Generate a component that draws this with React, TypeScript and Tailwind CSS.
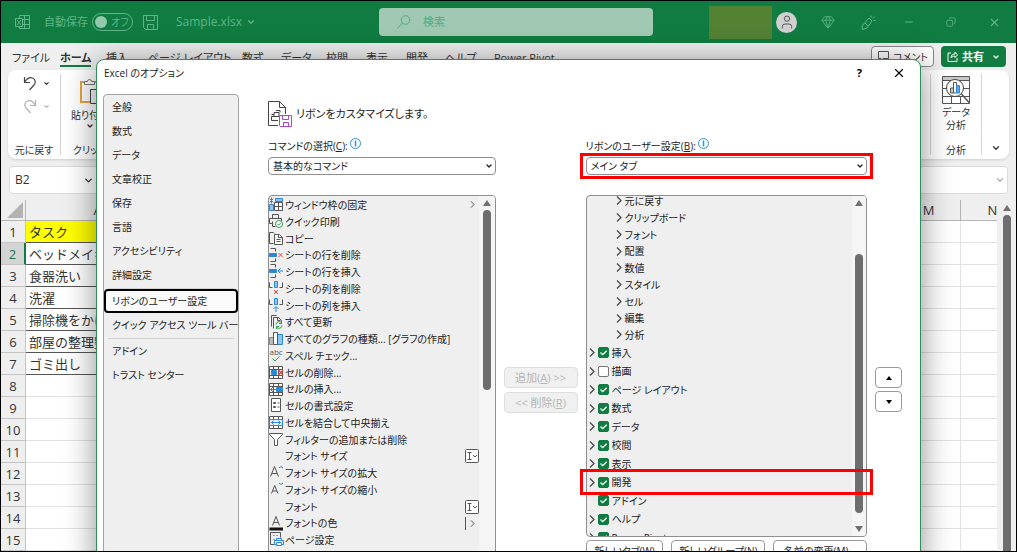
import React, { useState } from 'react';
import { Gem, ChevronDown, Minus, X, Copy, User } from 'lucide-react';

const GRAY = '#555';
const BLUE = '#2b88d8';
const RED = '#e8413c';
const GREEN = '#2ea04f';

interface Command {
  label: string;
  icon?: React.ReactNode;
  trailing?: 'more' | 'input' | 'split';
}

const cells = (
  <>
    <path d="M1 2h13v12H1z" fill="#fff" />
    <path d="M1 5h13M1 11h13M5 2v12M10 2v12" />
  </>
);

const commands: Command[] = [
  {
    label: 'ウィンドウ枠の固定',
    trailing: 'more',
    icon: (
      <>
        <path d="M6 6h8v8H6z" fill="#fff" />
        <path d="M7 2h7v3H7zM1 8h4v6H1z" fill="#8cc4f2" stroke={BLUE} />
        <path d="M6 10h8M10 6v8" />
        <path d="M3 1v6M1 2l4 4M5 2L1 6" stroke={BLUE} />
      </>
    ),
  },
  {
    label: 'クイック印刷',
    icon: (
      <>
        <path d="M4 5V1h6v4M4 10H1V5h12v3M4 8v5h3" />
        <circle cx="10.500" cy="10.500" r="3.500" fill="#fff" stroke={GREEN} />
        <path d="M9 10.500l1.200 1.200 2-2.200" stroke={GREEN} />
      </>
    ),
  },
  {
    label: 'コピー',
    icon: (
      <>
        <path d="M5 13H1V2h4l1 1" />
        <path d="M6 4h5l3 3v7H6z" fill="#fff" />
        <path d="M10 4v3h4M8 9h4M8 11h4" />
      </>
    ),
  },
  {
    label: 'シートの行を削除',
    icon: (
      <>
        <path d="M2 1h5v3M2 14h5v-3" />
        <path d="M1 6h7v3H1z" fill={BLUE} stroke={BLUE} />
        <path d="M10 5.500l4 4M14 5.500l-4 4" stroke={RED} />
      </>
    ),
  },
  {
    label: 'シートの行を挿入',
    icon: (
      <>
        <path d="M2 1h5v3M2 14h5v-3" />
        <path d="M1 6h7v3H1z" fill={BLUE} stroke={BLUE} />
        <path d="M14.500 7.500H10M12 5l-2.500 2.500L12 10" stroke={BLUE} />
      </>
    ),
  },
  {
    label: 'シートの列を削除',
    icon: (
      <>
        <path d="M1 2v5h3M14 2v5h-3" />
        <path d="M6 1h3v6H6z" fill="#8cc4f2" stroke={BLUE} />
        <path d="M5.500 9.500l4 4M9.500 9.500l-4 4" stroke={RED} />
      </>
    ),
  },
  {
    label: 'シートの列を挿入',
    icon: (
      <>
        <path d="M1 2v5h3M14 2v5h-3" />
        <path d="M6 1h3v6H6z" fill="#8cc4f2" stroke={BLUE} />
        <path d="M7.500 14.500V9.500M5 11.500L7.500 9l2.500 2.500" stroke={BLUE} />
      </>
    ),
  },
  {
    label: 'すべて更新',
    icon: (
      <>
        <path d="M3 12V1h5M5 14V3h5l3 3v1M9 3v3h3" />
        <path d="M7.500 10a3 3 0 0 1 5.500-1.500M13 6.500v2.500h-2.500M13.500 11a3 3 0 0 1-5.500 1.500M8 14.500V12h2.500" stroke={GREEN} />
      </>
    ),
  },
  {
    label: 'すべてのグラフの種類... [グラフの作成]',
    icon: (
      <>
        <path d="M1 7h4v7H1z" fill="#bbb" stroke="#888" />
        <path d="M9 4h5v10H9z" fill="#8cc4f2" stroke={BLUE} />
        <path d="M5 2h4v12H5z" fill="#fff" />
      </>
    ),
  },
  {
    label: 'スペル チェック...',
    icon: (
      <>
        <text x="1" y="7" fontSize="8" fill={GRAY} stroke="none">abc</text>
        <path d="M4 11l2.500 2.500L11 9" stroke={GREEN} />
      </>
    ),
  },
  {
    label: 'セルの削除...',
    icon: (
      <>
        {cells}
        <path d="M3 6h5v4H3z" fill={BLUE} stroke={BLUE} />
        <path d="M10 5.500l4.500 5M14.500 5.500l-4.500 5" stroke={RED} strokeWidth="1.300" />
      </>
    ),
  },
  {
    label: 'セルの挿入...',
    icon: (
      <>
        {cells}
        <path d="M8 6h6v4H8z" fill={BLUE} stroke={BLUE} />
        <path d="M8 8H2M4.500 5.500L2 8l2.500 2.500" stroke={BLUE} />
      </>
    ),
  },
  {
    label: 'セルの書式設定',
    icon: (
      <>
        <path d="M3 1h9v13H3z" fill="#fff" />
        <path d="M5 5h2v1H5zM5 9h2v1H5zM9 5.500h2M9 9.500h2" />
      </>
    ),
  },
  {
    label: 'セルを結合して中央揃え',
    icon: (
      <>
        {cells}
        <path d="M1 5h13v6H1z" fill="#e6f3fc" stroke={BLUE} />
        <path d="M3 8h9M5 6L3 8l2 2M10 6l2 2-2 2" stroke={BLUE} />
      </>
    ),
  },
  {
    label: 'フィルターの追加または削除',
    icon: <path d="M1 2h13v1L9 8v6H6V8L1 3z" fill="#fff" />,
  },
  { label: 'フォント サイズ', trailing: 'input' },
  {
    label: 'フォント サイズの拡大',
    icon: (
      <>
        <path d="M2 12L6 2l4 10M3.300 9h5.400" />
        <path d="M10.500 3.500L12.500 2l2 1.500" stroke={BLUE} />
      </>
    ),
  },
  {
    label: 'フォント サイズの縮小',
    icon: (
      <>
        <path d="M3 12l3.200-8 3.200 8M4 9.500h4.400" />
        <path d="M10.500 1.500l2 1.500 2-1.500" stroke={BLUE} />
      </>
    ),
  },
  { label: 'フォント', trailing: 'input' },
  {
    label: 'フォントの色',
    trailing: 'split',
    icon: (
      <>
        <path d="M4 10L7.500 1 11 10M5.200 7h4.600" />
        <path d="M1 12h13.500v3H1z" fill="#111" stroke="none" />
      </>
    ),
  },
  {
    label: 'ページ設定',
    icon: (
      <>
        <path d="M6 13H2V1h10v5M5 4h1M5 8h1M8 4h1" />
        <path d="M8 9V7h5v2M8 13H6V9h9v4h-2M8 11h5v3H8z" fill="#fff" stroke={BLUE} />
      </>
    ),
  },
];

const ribbonGroups = ['元に戻す', 'クリップボード', 'フォント', '配置', '数値', 'スタイル', 'セル', '編集', '分析'];

const initialTabs = [
  { label: '挿入', checked: true, expandable: true },
  { label: '描画', checked: false, expandable: true },
  { label: 'ページ レイアウト', checked: true, expandable: true },
  { label: '数式', checked: true, expandable: true },
  { label: 'データ', checked: true, expandable: true },
  { label: '校閲', checked: true, expandable: true },
  { label: '表示', checked: true, expandable: true },
  { label: '開発', checked: true, expandable: true },
  { label: 'アドイン', checked: true, expandable: false },
  { label: 'ヘルプ', checked: true, expandable: true },
  { label: 'Power Pivot', checked: true, expandable: true },
];

const menuTabs = ['ファイル', 'ホーム', '挿入', 'ページ レイアウト', '数式', 'データ', '校閲', '表示', '開発', 'ヘルプ', 'Power Pivot'];
const columns = ['A', 'B', 'C', 'D', 'E', 'F', 'G', 'H', 'I', 'J', 'K', 'L', 'M', 'N'];
const tasks = ['タスク', 'ベッドメイキング', '食器洗い', '洗濯', '掃除機をかける', '部屋の整理整頓', 'ゴミ出し'];

function Glyph({ children }: { children?: React.ReactNode }) {
  return (
    <svg width="15" height="15" viewBox="0.500 0.500 15 15" fill="none" stroke={GRAY} className="shrink-0">
      {children}
    </svg>
  );
}

function Triangle({ down = false }: { down?: boolean }) {
  return (
    <svg width="8" height="6" viewBox="0 0 8 6" fill="#707070" className="shrink-0">
      <path d={down ? 'M0 0h8L4 6z' : 'M0 6h8L4 0z'} />
    </svg>
  );
}

function Expander({ small = false }: { small?: boolean }) {
  return (
    <svg
      width={small ? 5 : 6}
      height={small ? 7 : 9}
      viewBox="0 0 6 9"
      fill="none"
      stroke="#444"
      strokeWidth="1.200"
      className="shrink-0"
    >
      <path d="M1 0.500l4 4-4 4" />
    </svg>
  );
}

function InfoMark() {
  return (
    <svg width="11" height="11" viewBox="0 0 11 11" fill="none" stroke="#2b95d6" className="mb-1">
      <circle cx="5.500" cy="5.500" r="5" />
      <path d="M5.500 2.500v6" strokeWidth="1.500" />
    </svg>
  );
}

function TitleBar() {
  return (
    <header className="flex h-[42px] items-center bg-[#107c41] text-[#5fb588]">
      <div className="flex w-[378px] items-center pl-[14px] whitespace-nowrap">
        <svg width="15" height="15" viewBox="0 0 15 15" fill="none" stroke="currentColor">
          <path d="M4.500 3V0.500h10v13h-10V11M9.500 0.500v13M4 4.500h10M8 9.500h6" />
          <path d="M0.500 3.500h7v8h-7z" fill="#107c41" />
          <path d="M2 5l4 5M6 5l-4 5" />
        </svg>
        <span className="ml-[14px] text-[11px]">自動保存</span>
        <button className="ml-1 flex h-[18px] w-[41px] items-center gap-1 rounded-full border border-[#5fb588] px-0.5 text-[10px] leading-4">
          <span className="size-3 shrink-0 rounded-full bg-[#8fcbab]" />
          オフ
        </button>
        <button aria-label="保存" className="ml-[10px]">
          <svg width="15" height="15" viewBox="0 0 15 15" fill="none" stroke="currentColor">
            <path d="M0.500 0.500h14v14h-12l-2-2zM3.500 0.500v5h8v-5M4.500 14.500v-5h6v5" />
          </svg>
        </button>
        <button className="ml-[18px] flex items-center gap-1 text-[12px]">
          Sample.xlsx
          <ChevronDown className="size-[10px]" strokeWidth={3} />
        </button>
      </div>
      <label className="flex h-7 flex-1 items-center gap-3 rounded-sm bg-[#a0c8b3] px-[18px] text-[#4bae7a]">
        <svg width="14" height="14" viewBox="0 0 14 14" fill="none" stroke="currentColor" className="shrink-0">
          <circle cx="8.500" cy="5" r="4.300" />
          <path d="M5.400 8.200L0.500 13.300" />
        </svg>
        <input
          aria-label="検索"
          placeholder="検索"
          className="min-w-0 flex-1 bg-transparent text-[11px] outline-none placeholder:text-[#4bae7a]"
        />
      </label>
      <div className="flex w-[363px] items-center justify-end pr-[15px]">
        <span className="h-[33px] w-[63px] bg-[#548235]" />
        <span className="ml-1 flex size-[21px] items-center justify-center rounded-full bg-[#d0d0d0] text-[#555]">
          <User className="size-4" strokeWidth={1.5} />
        </span>
        <button aria-label="プレミアム" className="ml-6">
          <Gem className="size-[14px]" strokeWidth={1.5} />
        </button>
        <button aria-label="ペン" className="ml-[26px]">
          <svg width="15" height="15" viewBox="0 0 15 15" fill="none" stroke="currentColor">
            <path d="M8 3l3 3-5 7-4.500 1.500L1 11zM4 8l3 3M10 2.500V0.500M12 3.500l1.500-2M12.500 5.500h2" />
          </svg>
        </button>
        <button aria-label="最小化" className="ml-[27px]">
          <Minus className="size-3" strokeWidth={2} />
        </button>
        <button aria-label="元のサイズに戻す" className="ml-[31px]">
          <Copy className="size-[10px] -scale-x-100" strokeWidth={2} />
        </button>
        <button aria-label="閉じる" className="ml-8">
          <X className="size-[13px]" strokeWidth={2} />
        </button>
      </div>
    </header>
  );
}

function Ribbon() {
  return (
    <div className="text-[10px] leading-[14px] text-[#333]">
      <div className="flex h-[27px] justify-between pr-[10px] pl-[11px]">
        <nav className="grid grid-cols-[48px_46px_42px_94px_39px_45px_40px_40px_39px_49px_auto] text-[11px] whitespace-nowrap">
          {menuTabs.map((tab) => (
            <a key={tab} href="#" className={`pt-2 ${tab === 'ホーム' ? 'font-bold' : ''}`}>
              <span className={`inline-block h-4 ${tab === 'ホーム' ? 'border-b-2 border-[#107c41]' : ''}`}>{tab}</span>
            </a>
          ))}
        </nav>
        <div className="flex items-start gap-[7px] pt-[3px]">
          <button className="flex h-[21px] w-[63px] items-center gap-1 rounded border border-[#8a8a8a] bg-white pl-1.5 whitespace-nowrap">
            <svg width="11" height="11" viewBox="0 0 11 11" fill="none" stroke={GRAY} className="shrink-0">
              <path d="M0.500 0.500h10v7H5l-2 2.500V7.500H0.500z" />
            </svg>
            コメント
          </button>
          <button className="flex h-[21px] w-[65px] items-center justify-center gap-1 rounded bg-[#107c41] text-[11px] font-bold text-white">
            <svg width="11" height="11" viewBox="0 0 11 11" fill="none" stroke="#fff">
              <path d="M4 2H1v8.500h9V7M4 7c0-3 2-4 4-4V1l2.500 3L8 6.500V5C6 5 5 6 4 7z" />
            </svg>
            共有
            <ChevronDown className="ml-1 size-2" strokeWidth={4} />
          </button>
        </div>
      </div>

      <div className="mx-[7px] flex h-[89px] justify-between rounded-lg bg-white py-1 shadow">
        <div className="flex">
          <div className="flex w-[53px] flex-col items-center border-r border-[#d4d4d4] pt-0.5">
            <button aria-label="元に戻す" className="flex items-center gap-1.5 pl-1">
              <svg width="14" height="15" viewBox="0 0 14 15" fill="none" stroke="#444" strokeWidth="1.200">
                <path d="M1.500 1v5.500H7M1.500 6.500C4 2 7 1 9.500 2c3 1.300 3.500 4.500 1.500 7L6.500 14" />
              </svg>
              <ChevronDown className="size-[7px]" strokeWidth={4} />
            </button>
            <button aria-label="やり直し" className="mt-2 flex items-center gap-1.5 pl-1 text-[#b0b0b0]">
              <svg width="14" height="15" viewBox="0 0 14 15" fill="none" stroke="#b0b0b0" strokeWidth="1.200">
                <path d="M12.500 1v5.500H7M12.500 6.500C10 2 7 1 4.500 2 1.500 3.300 1 6.500 3 9l4.500 5" />
              </svg>
              <ChevronDown className="size-[7px]" strokeWidth={4} />
            </button>
            <span className="mt-auto -mb-0.5">元に戻す</span>
          </div>
          <div className="flex w-[58px] flex-col items-center pt-1 whitespace-nowrap">
            <svg width="24" height="27" viewBox="0 0 24 27" fill="none">
              <path d="M3 4h17v20H3z" stroke="#e8a33d" strokeWidth="2" fill="#fff" />
              <path d="M6.500 6.500v-3h3a2 2 0 0 1 4 0h3v3z" fill="#fff" stroke="#777" />
              <path d="M12.500 11.500h10v14h-10z" fill="#f8f8f8" stroke="#444" />
            </svg>
            <span className="mt-[3px]">貼り付け</span>
            <ChevronDown className="size-2" strokeWidth={4} />
            <span className="mt-auto -mb-0.5">クリップ</span>
          </div>
        </div>
        <div className="flex">
          <div className="flex w-[52px] flex-col items-center border-x border-[#d4d4d4] pt-0.5">
            <svg width="28" height="28" viewBox="0 0 28 28" fill="none" stroke="#555">
              <path d="M0.500 0.500h27v27H0.500z" fill="#fff" />
              <path d="M1 1h26v3H1z" fill="#c8c8c8" stroke="none" />
              <path d="M0.500 4.500h27M0.500 12.500h27M0.500 20.500h27M9.500 20v7M18.500 20v7" />
              <circle cx="13" cy="12" r="8.500" fill="#fff" stroke="#444" />
              <path d="M8.500 12h3v5h-3z" fill="#ccc" />
              <path d="M11.500 6.500h3V17h-3z" fill="#fff" />
              <path d="M14.500 9.500h3V17h-3z" fill="#5aa9e6" stroke="#2b88d8" />
              <path d="M19.500 18l8 9" strokeWidth="1.500" />
            </svg>
            <span className="mt-0.5 text-center leading-[13px]">
              データ
              <br />
              分析
            </span>
            <span className="mt-auto -mb-0.5">分析</span>
          </div>
          <button aria-label="リボンの表示オプション" className="flex w-[27px] items-end justify-center pb-0.5">
            <ChevronDown className="size-[10px]" strokeWidth={3} />
          </button>
        </div>
      </div>

      <div className="mx-2 mt-[7px] flex gap-2">
        <div className="flex h-7 w-[90px] items-center justify-between rounded border border-[#dcdcdc] bg-white pr-1 pl-[5px] text-[12px]">
          B2
          <ChevronDown className="size-[11px]" strokeWidth={3} />
        </div>
        <div className="flex h-7 flex-1 items-center justify-end rounded border border-[#dcdcdc] bg-white pr-0.5">
          <ChevronDown className="size-[10px] text-[#aaa]" strokeWidth={3} />
        </div>
      </div>
    </div>
  );
}

function Sheet() {
  return (
    <div className="mt-1.5 flex min-h-0 flex-1">
      <div className="min-w-0 flex-1 overflow-hidden">
        <table className="w-[calc(100%+28px)] table-fixed border-separate border-spacing-0 text-[13px] leading-[18px] text-[#333]">
          <thead>
            <tr>
              <th className="h-[21px] w-[25px] border-r border-b border-[#b5b5b5] pl-1.5">
                <svg width="16" height="16" viewBox="0 0 16 16" fill="#b2b2b2">
                  <path d="M16 0v16H0z" />
                </svg>
              </th>
              {columns.map((column) => (
                <th
                  key={column}
                  className={`border-r border-b border-[#b5b5b5] font-normal ${column === 'A' ? 'w-[144px]' : ''} ${
                    column === 'M' || column === 'N' ? 'w-[64px]' : ''
                  }`}
                >
                  {column}
                </th>
              ))}
            </tr>
          </thead>
          <tbody>
            {Array.from({ length: 15 }, (_, row) => (
              <tr key={row}>
                <th
                  className={`h-[22px] border-b font-normal ${
                    row === 1
                      ? 'border-r-2 border-r-[#107c41] border-b-[#c4c4c4] bg-[#d4d4d4] text-[#217346]'
                      : 'border-r border-[#c4c4c4]'
                  }`}
                >
                  {row + 1}
                </th>
                {columns.map((column) => {
                  const filled = column === 'A' && row < tasks.length;
                  return (
                    <td
                      key={column}
                      className={`overflow-hidden border-r border-b py-0 pl-[3px] whitespace-nowrap ${
                        filled ? 'border-[#555] [font-feature-settings:normal]' : 'border-[#e1e1e1]'
                      } ${filled && row === 0 ? 'bg-[#ffff00]' : 'bg-white'}`}
                    >
                      {filled ? tasks[row] : ''}
                    </td>
                  );
                })}
              </tr>
            ))}
          </tbody>
        </table>
      </div>
      <div className="flex w-[19px] flex-col items-center pt-[5px]">
        <Triangle />
        <span className="mt-1 w-2 flex-1 rounded-t-full bg-[#6e6e6e]" />
      </div>
    </div>
  );
}

const navGroups = [
  ['全般', '数式', 'データ', '文章校正', '保存', '言語', 'アクセシビリティ', '詳細設定'],
  ['リボンのユーザー設定', 'クイック アクセス ツール バー'],
  ['アドイン', 'トラスト センター'],
];

function OptionsNav() {
  return (
    <nav className="ml-1.5 w-[136px] shrink-0 rounded-t border border-[#a3a3a3] bg-[#efefef]">
      {navGroups.map((group, index) => (
        <div key={index} className={index > 0 ? 'before:mx-1 before:mt-px before:block before:h-px before:bg-[#d2d2d2]' : ''}>
          {group.map((item) =>
            item === 'リボンのユーザー設定' ? (
              <a
                key={item}
                href="#"
                aria-current="page"
                className="block h-6 rounded border-2 border-black bg-[#fafafa] pl-1.5 leading-5 whitespace-nowrap"
              >
                {item}
              </a>
            ) : (
              <a key={item} href="#" className="block h-6 pl-2 leading-6 whitespace-nowrap">
                {item}
              </a>
            )
          )}
        </div>
      ))}
    </nav>
  );
}

function CommandRow({ command }: { command: Command }) {
  return (
    <li className="flex items-center gap-px pr-1">
      <Glyph>{command.icon}</Glyph>
      <span className="flex-1 whitespace-nowrap">{command.label}</span>
      {command.trailing === 'more' && <Expander small />}
      {command.trailing === 'split' && (
        <span className="flex items-center gap-1">
          <span className="h-[13px] w-px bg-[#555]" />
          <Expander small />
        </span>
      )}
      {command.trailing === 'input' && (
        <svg width="14" height="14" viewBox="0 0 14 14" fill="#fff" stroke={GRAY} className="-mr-1">
          <rect x="0.500" y="0.500" width="13" height="13" rx="1" />
          <path d="M2.500 3.500h4M2.500 10.500h4M4.500 3.500v7M8 6l2 2 2-2" />
        </svg>
      )}
    </li>
  );
}

function OptionsDialog() {
  const [tabs, setTabs] = useState(initialTabs);

  const toggleTab = (label: string) => {
    setTabs(prev => prev.map((tab) => (tab.label === label ? { ...tab, checked: !tab.checked } : tab)));
  };

  const buttonClass = 'rounded border border-[#9a9a9a] bg-white whitespace-nowrap';

  return (
    <div
      role="dialog"
      aria-label="Excel のオプション"
      className="absolute top-[58px] right-[95px] -bottom-4 left-[95px] flex flex-col rounded-t-lg border border-[#2f8f5b] bg-white text-[10px] leading-4 text-[#222] shadow-[0_4px_32px_rgba(0,0,0,0.45)]"
    >
      <div className="flex h-[34px] shrink-0 items-start justify-between pt-[5px] pr-[14px] pl-[7px]">
        <h1>Excel のオプション</h1>
        <div className="flex items-center gap-[30px] text-black">
          <button aria-label="ヘルプ" className="text-[11px] font-bold">?</button>
          <button aria-label="閉じる">
            <X className="size-[14px]" strokeWidth={2} />
          </button>
        </div>
      </div>

      <div className="flex min-h-0 flex-1">
        <OptionsNav />
        <main className="flex min-w-0 flex-1 flex-col pr-[18px] pl-[29px]">
          <div className="flex h-10 shrink-0 items-center gap-1">
            <svg width="24" height="26" viewBox="0 0 24 26" fill="none" stroke="#444">
              <path d="M10 24.500H0.500V0.500h11l6 6V13M11.500 0.500v6h6" />
              <path d="M6 11.500h5v4H6zM10 15.500H3.500v4H10M6 13.500H3.500M8 9.500h4v2" />
              <path d="M11.500 14.500h12v11h-11l-1-1zM14.500 14.500v4h6v-4M15.500 25v-3.500h5V25" fill="#fff" stroke="#b146c2" />
            </svg>
            <h2 className="text-[11px]">リボンをカスタマイズします。</h2>
          </div>

          <div className="grid min-h-0 flex-1 grid-cols-[228fr_74px_282fr_27px] grid-rows-[23px_18px_1fr] gap-x-2">
            <label htmlFor="command-source" className="flex items-center gap-0.5">
              <span>コマンドの選択(<u>C</u>):</span>
              <InfoMark />
            </label>
            <label htmlFor="ribbon-target" className="col-start-3 flex items-center gap-0.5">
              <span>リボンのユーザー設定(<u>B</u>):</span>
              <InfoMark />
            </label>

            <div className="relative row-start-2">
              <select id="command-source" className="block h-[18px] w-full appearance-none rounded border border-[#8f8f8f] bg-white pl-1">
                <option>基本的なコマンド</option>
              </select>
              <ChevronDown className="pointer-events-none absolute top-[5px] right-[3px] size-2" strokeWidth={4} />
            </div>
            <div className="relative col-start-3 row-start-2">
              <select id="ribbon-target" className="block h-[18px] w-full appearance-none rounded border border-[#8f8f8f] bg-white pl-1">
                <option>メイン タブ</option>
              </select>
              <ChevronDown className="pointer-events-none absolute top-[5px] right-[3px] size-2" strokeWidth={4} />
              <span className="pointer-events-none absolute -inset-x-1.5 -inset-y-1 border-3 border-[#ff0000]" />
            </div>

            {/* Available commands */}
            <div className="row-start-3 mt-5 flex overflow-hidden rounded-t border border-[#8f8f8f] bg-[#efefef]">
              <ul className="grid min-w-0 flex-1 auto-rows-[17px_17px_17px_16px] content-start">
                {commands.map((command) => (
                  <CommandRow key={command.label} command={command} />
                ))}
              </ul>
              <div className="flex w-4 flex-col items-center bg-[#f5f5f5] pt-1">
                <Triangle />
                <span className="mt-1 h-[180px] w-2 rounded-full bg-[#6e6e6e]" />
              </div>
            </div>

            <div className="row-start-3 flex flex-col gap-1 pt-[192px] text-[11px] text-[#b5b5b5]">
              <button disabled className="h-[21px] rounded border border-[#dedede] bg-[#f0f0f0] whitespace-nowrap">
                追加(<u>A</u>) &gt;&gt;
              </button>
              <button disabled className="h-[21px] rounded border border-[#dedede] bg-[#f0f0f0] whitespace-nowrap">
                &lt;&lt; 削除(<u>R</u>)
              </button>
            </div>

            {/* Ribbon tabs */}
            <div className="relative row-start-3 mt-5">
              <div className="flex h-[342px] overflow-hidden rounded border border-[#8f8f8f] bg-[#efefef]">
                <div className="min-w-0 flex-1">
                  <ul className="-mt-1 grid auto-rows-[17px_17px_17px_16px] pl-[29px]">
                    {ribbonGroups.map((group) => (
                      <li key={group} className="flex items-center gap-[3px]">
                        <Expander />
                        {group}
                      </li>
                    ))}
                  </ul>
                  <ul className="grid auto-rows-[19px_18px] pl-0.5">
                    {tabs.map((tab) => (
                      <li key={tab.label} className="flex items-center gap-[3px]">
                        <span className="w-1.5">{tab.expandable && <Expander />}</span>
                        <label className="flex items-center gap-[3px]">
                          <span className="relative size-[11px]">
                            <input
                              type="checkbox"
                              checked={tab.checked}
                              onChange={() => toggleTab(tab.label)}
                              className="block size-[11px] appearance-none rounded-xs border border-[#777] bg-white checked:border-[#107c41] checked:bg-[#107c41]"
                            />
                            {tab.checked && (
                              <svg width="11" height="11" viewBox="0 0 11 11" fill="none" stroke="#fff" strokeWidth="1.300" className="pointer-events-none absolute inset-0">
                                <path d="M2.500 5.500l2.200 2.200L8.700 3.700" />
                              </svg>
                            )}
                          </span>
                          {tab.label}
                        </label>
                      </li>
                    ))}
                  </ul>
                </div>
                <div className="flex w-[14px] flex-col bg-[#f5f5f5] px-[3px] py-1">
                  <Triangle />
                  <span className="mt-12 h-[259px] w-2 rounded-full bg-[#6e6e6e]" />
                  <span className="mt-auto">
                    <Triangle down />
                  </span>
                </div>
              </div>
              <div className="mt-[3px] grid grid-cols-[78fr_94fr_94fr] gap-2">
                <button className={`h-[21px] ${buttonClass}`}>新しいタブ(<u>W</u>)</button>
                <button className={`h-[21px] ${buttonClass}`}>新しいグループ(<u>N</u>)</button>
                <button className={`h-[21px] ${buttonClass}`}>名前の変更(<u>M</u>)...</button>
              </div>
              <span className="pointer-events-none absolute -inset-x-1.5 top-[274px] h-[26px] border-3 border-[#ff0000]" />
            </div>

            <div className="row-start-3 flex flex-col gap-[3px] pt-[192px]">
              <button aria-label="上へ" className={`flex h-[21px] items-center justify-center ${buttonClass}`}>
                <svg width="6" height="4" viewBox="0 0 6 4"><path d="M0 4h6L3 0z" /></svg>
              </button>
              <button aria-label="下へ" className={`flex h-[21px] items-center justify-center ${buttonClass}`}>
                <svg width="6" height="4" viewBox="0 0 6 4"><path d="M0 0h6L3 4z" /></svg>
              </button>
            </div>
          </div>
        </main>
      </div>
    </div>
  );
}

export default function App() {
  return (
    <div className="relative flex h-screen flex-col overflow-hidden border border-black bg-[#efefef] font-['Open_Sans','Noto_Sans_CJK_JP',sans-serif] [font-feature-settings:'palt']">
      <TitleBar />
      <Ribbon />
      <Sheet />
      <OptionsDialog />
    </div>
  );
}
